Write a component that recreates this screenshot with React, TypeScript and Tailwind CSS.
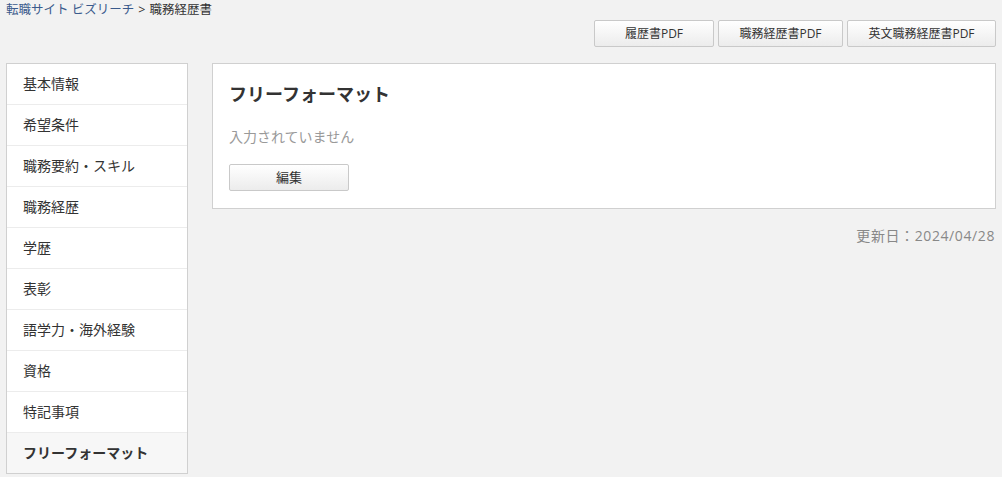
import React from "react";

const navItems = [
  "基本情報",
  "希望条件",
  "職務要約・スキル",
  "職務経歴",
  "学歴",
  "表彰",
  "語学力・海外経験",
  "資格",
  "特記事項",
  "フリーフォーマット",
];

const pdfButtons = ["履歴書PDF", "職務経歴書PDF", "英文職務経歴書PDF"];

const btn =
  "h-[27px] rounded-[2px] border border-[#c9c9c9] bg-gradient-to-b from-white to-[#ececec] text-[12px] text-[#333] flex items-center justify-center";

export default function App() {
  return (
    <div
      className="min-h-[477px] w-full bg-[#f2f2f2] px-[6px] text-[#333]"
      style={{ fontFamily: '"Open Sans", "Noto Sans CJK JP", "Noto Sans", sans-serif' }}
    >
      {/* breadcrumb */}
      <div className="h-[20px] pt-[1px] text-[12.5px] leading-[18px]">
        <a className="text-[#3a5a8c]">転職サイト ビズリーチ</a>
        <span className="mx-[4px]">&gt;</span>
        <span>職務経歴書</span>
      </div>

      {/* pdf downloads */}
      <div className="flex justify-end gap-[4px]">
        <button className={`${btn} w-[120px]`}>{pdfButtons[0]}</button>
        <button className={`${btn} w-[125px]`}>{pdfButtons[1]}</button>
        <button className={`${btn} w-[149px]`}>{pdfButtons[2]}</button>
      </div>

      <div className="mt-[16px] flex items-start gap-[24px]">
        {/* side navigation */}
        <ul className="w-[182px] shrink-0 border border-[#d0d0d0] bg-white">
          {navItems.map((item, i) => {
            const last = i === navItems.length - 1;
            return (
              <li
                key={item}
                className={
                  last
                    ? "flex h-[40px] items-center bg-[#f7f7f7] pb-[1px] pl-[16px] text-[14px] font-bold"
                    : "flex h-[41px] items-center border-b border-[#ececec] pb-[1px] pl-[16px] text-[14px]"
                }
              >
                {item}
              </li>
            );
          })}
        </ul>

        {/* main content */}
        <div className="flex-1">
          <section className="h-[146px] border border-[#d0d0d0] bg-white px-[16px]">
            <h2 className="mt-[17px] text-[18px] font-bold leading-[26px]">
              フリーフォーマット
            </h2>
            <p className="mt-[20px] text-[14px] leading-[20px] text-[#999]">
              入力されていません
            </p>
            <button className={`${btn} mt-[17px] w-[120px] text-[13px]`}>
              編集
            </button>
          </section>
          <p className="mt-[17px] pr-[1px] text-right text-[14px] leading-[20px] tracking-[0.6px] text-[#888]">
            更新日：2024/04/28
          </p>
        </div>
      </div>
    </div>
  );
}
